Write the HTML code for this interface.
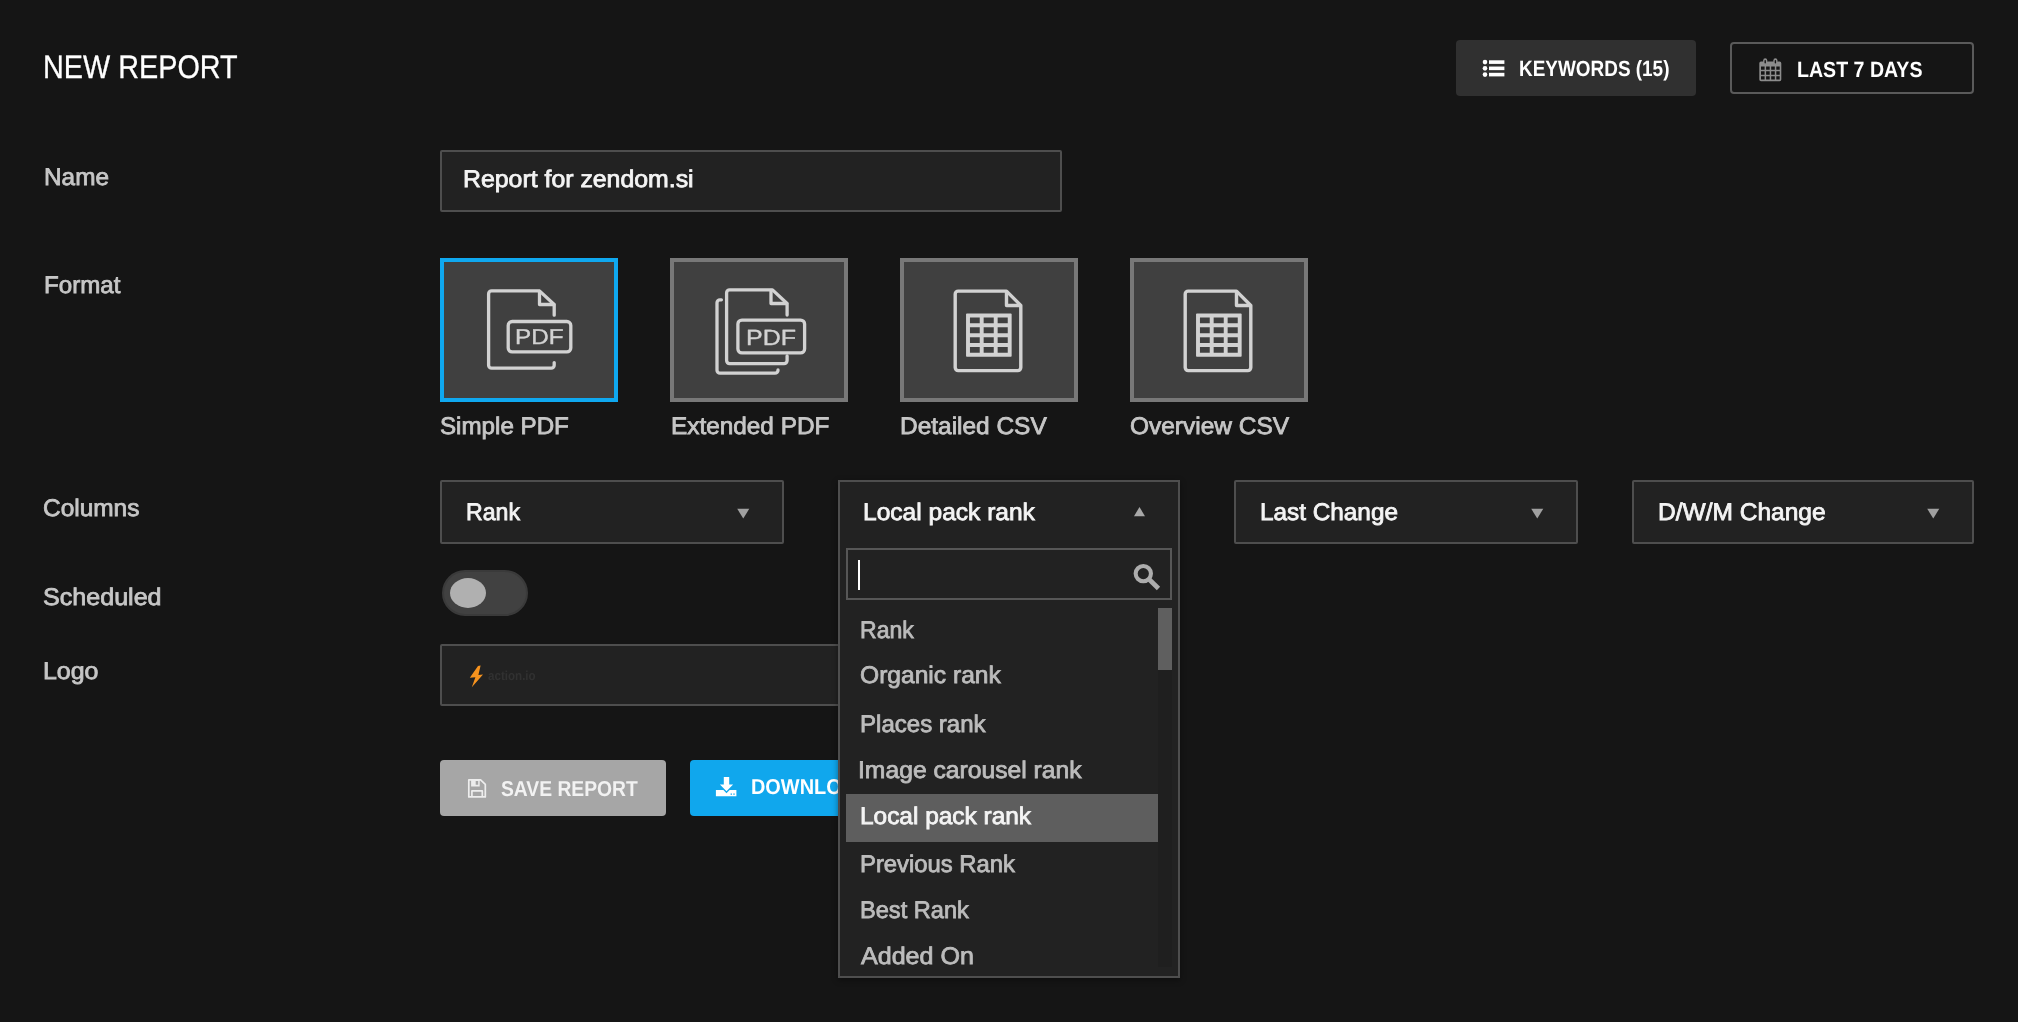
<!DOCTYPE html>
<html><head><meta charset="utf-8"><title>New Report</title>
<style>
html,body{margin:0;padding:0;}
body{width:2018px;height:1022px;overflow:hidden;background:#151515;font-family:"Liberation Sans",sans-serif;position:relative;}
.t{text-rendering:geometricPrecision;position:absolute;line-height:1;white-space:pre;transform-origin:0 84.65%;-webkit-text-stroke:0.8px currentColor;}
.a{position:absolute;box-sizing:border-box;}
.inp{background:#222222;border:2px solid #4e4e4e;border-radius:2px;}
.fmt{background:#404040;border:4px solid #787878;}
.fmt.sel{border-color:#0fa8ef;}
svg{position:absolute;overflow:visible;}

</style></head>
<body>
<!-- header buttons -->
<div class="a" style="left:1456px;top:40px;width:240px;height:56px;background:#303030;border-radius:4px;"></div>
<div class="a" style="left:1730px;top:42px;width:244px;height:52px;border:2px solid #5a5a5a;border-radius:4px;"></div>
<!-- name input -->
<div class="a inp" style="left:440px;top:150px;width:622px;height:62px;"></div>
<!-- format boxes -->
<div class="a fmt sel" style="left:440px;top:258px;width:178px;height:144px;"></div>
<div class="a fmt" style="left:670px;top:258px;width:178px;height:144px;"></div>
<div class="a fmt" style="left:900px;top:258px;width:178px;height:144px;"></div>
<div class="a fmt" style="left:1130px;top:258px;width:178px;height:144px;"></div>
<!-- selects -->
<div class="a inp" style="left:440px;top:480px;width:344px;height:64px;"></div>
<div class="a inp" style="left:1234px;top:480px;width:344px;height:64px;"></div>
<div class="a inp" style="left:1632px;top:480px;width:342px;height:64px;"></div>
<!-- toggle -->
<div class="a" style="left:442px;top:570px;width:86px;height:46px;border-radius:23px;background:#414141;border:2px solid #3a3a3a;"></div>
<div class="a" style="left:450px;top:578px;width:36px;height:30px;border-radius:50%;background:#b0b0b0;"></div>
<!-- logo -->
<div class="a inp" style="left:440px;top:644px;width:622px;height:62px;"></div>
<!-- buttons -->
<div class="a" style="left:440px;top:760px;width:226px;height:56px;background:#a6a6a6;border-radius:4px;"></div>
<div class="a" style="left:690px;top:760px;width:260px;height:56px;background:#10a7ed;border-radius:4px;"></div>
<!-- dropdown -->
<div class="a" style="left:838px;top:480px;width:342px;height:498px;background:#222222;border:2px solid #4e4e4e;z-index:3;box-shadow:0 2px 6px rgba(0,0,0,.4);"></div>
<div class="a" style="left:846px;top:548px;width:326px;height:52px;background:#222222;border:2px solid #575757;z-index:4;"></div>
<div class="a" style="left:858px;top:560px;width:2px;height:30px;background:#fff;z-index:4;"></div>
<div class="a" style="left:1158px;top:608px;width:14px;height:359px;background:#1f1f1f;z-index:4;"></div>
<div class="a" style="left:1158px;top:608px;width:14px;height:62px;background:#5f5f5f;z-index:4;"></div>
<div class="a" style="left:846px;top:794px;width:312px;height:47.7px;background:#5e5e5e;z-index:4;"></div>
<!-- SVG layer below dropdown -->
<svg width="2018" height="1022" viewBox="0 0 2018 1022" style="left:0;top:0;z-index:1;">
  <!-- list icon -->
  <g fill="#ffffff">
    <circle cx="1485" cy="62.1" r="2.3"/><circle cx="1485" cy="68.35" r="2.3"/><circle cx="1485" cy="74.6" r="2.3"/>
    <rect x="1489" y="60.3" width="15.4" height="3.6"/><rect x="1489" y="66.55" width="15.4" height="3.6"/><rect x="1489" y="72.8" width="15.4" height="3.6"/>
  </g>
  <!-- calendar icon -->
  <g fill="#8c8c8c">
    <path fill-rule="evenodd" d="M1761,61.5 h18.6 a1.7,1.7 0 0 1 1.7,1.7 v16.4 a1.7,1.7 0 0 1 -1.7,1.7 h-18.6 a1.7,1.7 0 0 1 -1.7,-1.7 v-16.4 a1.7,1.7 0 0 1 1.7,-1.7 z
      M1761,66.4 h3.6 v3.4 h-3.6 z M1766.1,66.4 h3.6 v3.4 h-3.6 z M1771.2,66.4 h3.6 v3.4 h-3.6 z M1776.3,66.4 h3.4 v3.4 h-3.4 z
      M1761,71.3 h3.6 v3.4 h-3.6 z M1766.1,71.3 h3.6 v3.4 h-3.6 z M1771.2,71.3 h3.6 v3.4 h-3.6 z M1776.3,71.3 h3.4 v3.4 h-3.4 z
      M1761,76.2 h3.6 v3.3 h-3.6 z M1766.1,76.2 h3.6 v3.3 h-3.6 z M1771.2,76.2 h3.6 v3.3 h-3.6 z M1776.3,76.2 h3.4 v3.3 h-3.4 z"/>
    <rect x="1763.2" y="58.2" width="4" height="6.4" rx="2"/>
    <rect x="1773.4" y="58.2" width="4" height="6.4" rx="2"/>
  </g>
  <rect x="1764.5" y="60" width="1.4" height="3.4" rx="0.7" fill="#151515"/>
  <rect x="1774.7" y="60" width="1.4" height="3.4" rx="0.7" fill="#151515"/>

  <!-- Simple PDF icon -->
  <g fill="none" stroke="#d2d2d2" stroke-width="3.3" stroke-linecap="round" stroke-linejoin="round">
    <path d="M554.2,315.2 V304.5 L539.5,290.9 H491.6 a3,3 0 0 0 -3,3 V365.2 a3,3 0 0 0 3,3 H551.2 a3,3 0 0 0 3,-3 V362.6"/>
    <path d="M539.5,291.5 V304.5 H553.8"/>
    <rect x="508.2" y="321.5" width="62.6" height="30.4" rx="4"/>
  </g>
  <!-- Extended PDF icon -->
  <g fill="none" stroke="#d2d2d2" stroke-width="3.3" stroke-linecap="round" stroke-linejoin="round">
    <path d="M787.1,315 V303.5 L772.5,289.9 H729.6 a3,3 0 0 0 -3,3 V360.6 a3,3 0 0 0 3,3 H784.1 a3,3 0 0 0 3,-3 V356"/>
    <path d="M771,290.5 V303.5 H786.7"/>
    <path d="M721.4,299.8 H720 a3,3 0 0 0 -3,3 V370.2 a3,3 0 0 0 3,3 H775 a3,3 0 0 0 3,-3 V370"/>
    <rect x="737.9" y="320.1" width="66.7" height="32.8" rx="4"/>
  </g>
  <!-- CSV icons -->
  <g fill="none" stroke="#d2d2d2" stroke-linejoin="round">
    <path stroke-width="3.4" d="M1006.5,291.1 H958.2 a3,3 0 0 0 -3,3 V367.6 a3,3 0 0 0 3,3 H1017.8 a3,3 0 0 0 3,-3 V305.5 z"/>
    <path stroke-width="3.4" d="M1006.5,291.5 V305.5 H1020.5"/>
    <path stroke-width="3.9" d="M968,313.9 V356.3 M981.7,313.9 V356.3 M995.7,313.9 V356.3 M1009.7,313.9 V356.3 M966.4,315.5 H1011.3 M966.4,325.3 H1011.3 M966.4,335.2 H1011.3 M966.4,345 H1011.3 M966.4,354.7 H1011.3"/>
  </g>
  <g transform="translate(230,0)" fill="none" stroke="#d2d2d2" stroke-linejoin="round">
    <path stroke-width="3.4" d="M1006.5,291.1 H958.2 a3,3 0 0 0 -3,3 V367.6 a3,3 0 0 0 3,3 H1017.8 a3,3 0 0 0 3,-3 V305.5 z"/>
    <path stroke-width="3.4" d="M1006.5,291.5 V305.5 H1020.5"/>
    <path stroke-width="3.9" d="M968,313.9 V356.3 M981.7,313.9 V356.3 M995.7,313.9 V356.3 M1009.7,313.9 V356.3 M966.4,315.5 H1011.3 M966.4,325.3 H1011.3 M966.4,335.2 H1011.3 M966.4,345 H1011.3 M966.4,354.7 H1011.3"/>
  </g>
  <!-- select arrows -->
  <g fill="#a0a0a0">
    <path d="M737.2,508.8 h12.1 l-6.05,9.7 z"/>
    <path d="M1531.2,508.8 h12.1 l-6.05,9.7 z"/>
    <path d="M1927.2,508.8 h12.1 l-6.05,9.7 z"/>
  </g>
  <!-- logo lightning -->
  <path fill="#f7931e" d="M480.6,665.6 L478,665.9 L469.8,677.8 L475.4,677.3 L471.8,687.3 L483,674.6 L478.4,675.1 z"/>
  <!-- save icon -->
  <g fill="none" stroke="#ededed" stroke-width="1.7" stroke-linejoin="round">
    <path d="M468.8,779.9 H480.6 L485.3,784.4 V796.9 H468.8 z"/>
    <path d="M471.9,796.9 V790.9 H482.3 V796.9"/>
  </g>
  <path fill="#ededed" fill-rule="evenodd" d="M471.1,779.9 h8.6 v6.6 h-8.6 z M475.7,781.1 h2.5 v3.7 h-2.5 z"/>
  <!-- download icon -->
  <g fill="#ffffff">
    <path d="M723.8,776.9 h5.4 v7.7 h3.9 l-6.6,6.7 l-6.6,-6.7 h3.9 z"/>
    <path fill-rule="evenodd" d="M715.9,790 h7.5 l3.1,3.2 l3.1,-3.2 h6.8 v6.2 h-20.5 z M730.6,793.4 h1.4 v1.3 h-1.4 z M733.3,793.4 h1.4 v1.3 h-1.4 z"/>
  </g>
</svg>
<!-- SVG layer above dropdown -->
<svg width="2018" height="1022" viewBox="0 0 2018 1022" style="left:0;top:0;z-index:6;">
  <path fill="#a8a8a8" d="M1134,516.2 h11 l-5.5,-9.2 z"/>
  <g fill="none" stroke="#acacac">
    <circle cx="1143.3" cy="573.6" r="7.65" stroke-width="4.1"/>
    <path d="M1149.3,579.5 L1158.5,588.5" stroke-width="4.7" stroke-linecap="butt"/>
  </g>
</svg>

<span class="t" style="left:42.8px;top:51.00px;font-size:32.6px;font-weight:400;color:#ffffff;transform:scale(0.8840,1.0000);-webkit-text-stroke:0.3px #fff;">NEW REPORT</span>
<span class="t" style="left:1518.8px;top:57.78px;font-size:22px;font-weight:700;color:#ffffff;transform:scale(0.8607,1.0000);-webkit-text-stroke:0;">KEYWORDS (15)</span>
<span class="t" style="left:1796.6px;top:58.88px;font-size:22px;font-weight:700;color:#ffffff;transform:scale(0.8900,1.0000);-webkit-text-stroke:0;">LAST 7 DAYS</span>
<span class="t" style="left:44.1px;top:166.28px;font-size:24px;font-weight:400;color:#c6c6c6;transform:scale(1.0148,1.0000);">Name</span>
<span class="t" style="left:463.4px;top:168.08px;font-size:24px;font-weight:400;color:#f4f4f4;transform:scale(1.0353,1.0000);">Report for zendom.si</span>
<span class="t" style="left:44.1px;top:274.28px;font-size:24px;font-weight:400;color:#c6c6c6;transform:scale(1.0048,1.0000);">Format</span>
<span class="t" style="left:440.1px;top:414.88px;font-size:24px;font-weight:400;color:#c6c6c6;transform:scale(1.0066,1.0000);">Simple PDF</span>
<span class="t" style="left:670.7px;top:414.88px;font-size:24px;font-weight:400;color:#c6c6c6;transform:scale(1.0148,1.0000);">Extended PDF</span>
<span class="t" style="left:900.1px;top:414.88px;font-size:24px;font-weight:400;color:#c6c6c6;transform:scale(1.0184,1.0000);">Detailed CSV</span>
<span class="t" style="left:1129.8px;top:414.88px;font-size:24px;font-weight:400;color:#c6c6c6;transform:scale(1.0192,1.0000);">Overview CSV</span>
<span class="t" style="left:43.4px;top:496.58px;font-size:24px;font-weight:400;color:#c6c6c6;transform:scale(1.0182,1.0000);">Columns</span>
<span class="t" style="left:465.8px;top:500.58px;font-size:24px;font-weight:400;color:#f4f4f4;transform:scale(0.9638,1.0000);">Rank</span>
<span class="t" style="left:863.0px;top:500.98px;font-size:24px;font-weight:400;color:#f4f4f4;transform:scale(1.0226,1.0000);z-index:5;">Local pack rank</span>
<span class="t" style="left:1260.2px;top:500.58px;font-size:24px;font-weight:400;color:#f4f4f4;transform:scale(1.0137,1.0000);">Last Change</span>
<span class="t" style="left:1657.6px;top:500.58px;font-size:24px;font-weight:400;color:#f4f4f4;transform:scale(1.0215,1.0000);">D/W/M Change</span>
<span class="t" style="left:43.4px;top:586.38px;font-size:24px;font-weight:400;color:#c6c6c6;transform:scale(1.0452,1.0000);">Scheduled</span>
<span class="t" style="left:43.4px;top:660.28px;font-size:24px;font-weight:400;color:#c6c6c6;transform:scale(1.0395,1.0000);">Logo</span>
<span class="t" style="left:501.1px;top:778.80px;font-size:21.5px;font-weight:700;color:#f2f2f2;transform:scale(0.8964,1.0000);-webkit-text-stroke:0;">SAVE REPORT</span>
<span class="t" style="left:751.1px;top:777.20px;font-size:21.5px;font-weight:700;color:#ffffff;transform:scale(0.9258,1.0000);-webkit-text-stroke:0;">DOWNLOAD</span>
<span class="t" style="left:514.8px;top:326.22px;font-size:21.6px;font-weight:400;color:#d2d2d2;transform:scale(1.1215,1.0000);-webkit-text-stroke:0.4px #d2d2d2;">PDF</span>
<span class="t" style="left:746.1px;top:327.28px;font-size:22px;font-weight:400;color:#d2d2d2;transform:scale(1.1372,1.0000);-webkit-text-stroke:0.4px #d2d2d2;">PDF</span>
<span class="t" style="left:487.7px;top:669.20px;font-size:13px;font-weight:700;color:#313131;transform:scale(0.8915,1.0000);-webkit-text-stroke:0;filter:blur(0.4px);">action.io</span>
<span class="t" style="left:859.5px;top:618.88px;font-size:24px;font-weight:400;color:#bcbcbc;transform:scale(0.9602,1.0000);z-index:5;">Rank</span>
<span class="t" style="left:859.5px;top:664.38px;font-size:24px;font-weight:400;color:#bcbcbc;transform:scale(1.0248,1.0000);z-index:5;">Organic rank</span>
<span class="t" style="left:859.5px;top:712.88px;font-size:24px;font-weight:400;color:#bcbcbc;transform:scale(1.0017,1.0000);z-index:5;">Places rank</span>
<span class="t" style="left:858.4px;top:759.18px;font-size:24px;font-weight:400;color:#bcbcbc;transform:scale(1.0285,1.0000);z-index:5;">Image carousel rank</span>
<span class="t" style="left:859.5px;top:804.78px;font-size:24px;font-weight:400;color:#f4f4f4;transform:scale(1.0173,1.0000);z-index:5;">Local pack rank</span>
<span class="t" style="left:859.5px;top:852.58px;font-size:24px;font-weight:400;color:#bcbcbc;transform:scale(0.9919,1.0000);z-index:5;">Previous Rank</span>
<span class="t" style="left:859.5px;top:898.68px;font-size:24px;font-weight:400;color:#bcbcbc;transform:scale(0.9836,1.0000);z-index:5;">Best Rank</span>
<span class="t" style="left:860.5px;top:945.18px;font-size:24px;font-weight:400;color:#bcbcbc;transform:scale(1.0446,1.0000);z-index:5;">Added On</span>
</body></html>
